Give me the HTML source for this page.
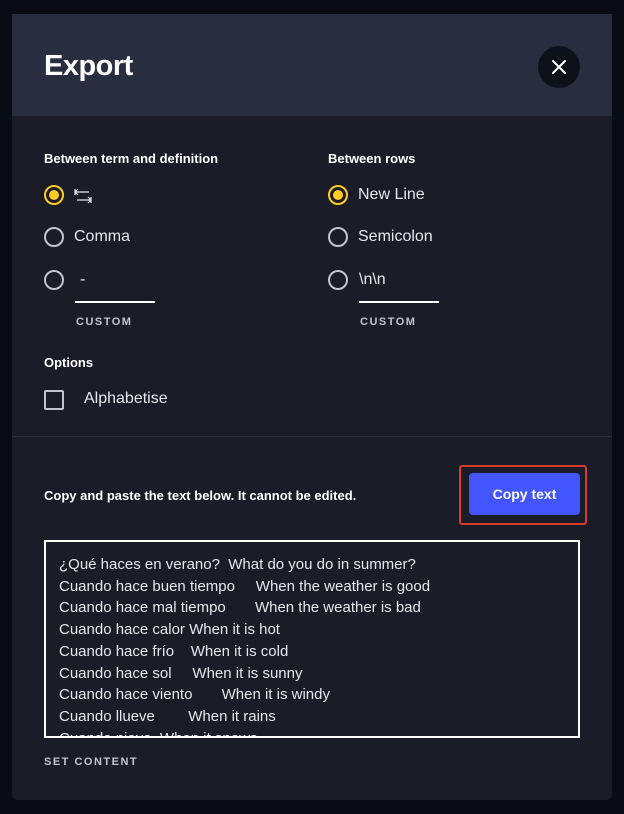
<!DOCTYPE html>
<html><head><style>
body{margin:0;width:624px;height:814px;background:#0a0c15;font-family:"Liberation Sans",sans-serif;position:relative;overflow:hidden;color:#fff}
.m{position:absolute;left:12px;top:14px;width:600px;height:786px;background:#1a1d28;border-radius:0 0 6px 6px}
.h{position:absolute;left:0;top:0;width:600px;height:102px;background:#282e3f}
.h h1{position:absolute;left:32px;top:36px;margin:0;font-size:29px;font-weight:bold;letter-spacing:-0.5px}
.x{position:absolute;left:526px;top:32px;width:42px;height:42px;border-radius:50%;background:#0f111a}
.lbl{position:absolute;font-size:13px;font-weight:bold;color:#fff}
.r{position:absolute;width:20px;height:20px;border:2px solid #c2c5cf;border-radius:50%;box-sizing:border-box}
.r.on{border-color:#ffcd1f}
.r.on::after{content:"";position:absolute;left:3px;top:3px;width:10px;height:10px;border-radius:50%;background:#ffcd1f}
.t{position:absolute;font-size:16px;color:#e6e7ec}
.ul{position:absolute;width:80px;height:2px;background:#fff}
.cap{position:absolute;font-size:11px;letter-spacing:1.5px;color:#c2c5cf;font-weight:bold}
.ta{position:absolute;left:32px;top:526px;width:536px;height:198px;border:2px solid #fff;box-sizing:border-box;overflow:hidden;padding:12px 0 0 13px;font-size:15px;line-height:21.7px;color:#e6e7ec;white-space:pre}
</style></head><body>
<div class="m">
<div class="h"><h1>Export</h1>
<div class="x"><svg width="42" height="42"><path d="M15 15L27 27M27 15L15 27" stroke="#fff" stroke-width="2" stroke-linecap="round"/></svg></div></div>
<div class="lbl" style="left:32px;top:137px">Between term and definition</div>
<div class="lbl" style="left:316px;top:137px">Between rows</div>
<div class="r on" style="left:32px;top:171px"></div>
<svg style="position:absolute;left:62px;top:174px" width="18" height="16"><path d="M1 1v6M1 4h14M1 4l3-3M1 4l3 3M17 9v6M3 12h14M17 12l-3-3M17 12l-3 3" stroke="#e6e7ec" stroke-width="1.2" fill="none"/></svg>
<div class="r" style="left:32px;top:213px"></div><div class="t" style="left:62px;top:214px">Comma</div>
<div class="r" style="left:32px;top:256px"></div><div class="t" style="left:68px;top:257px">-</div>
<div class="ul" style="left:63px;top:287px"></div><div class="cap" style="left:64px;top:302px">CUSTOM</div>
<div class="r on" style="left:316px;top:171px"></div><div class="t" style="left:346px;top:172px">New Line</div>
<div class="r" style="left:316px;top:213px"></div><div class="t" style="left:346px;top:214px">Semicolon</div>
<div class="r" style="left:316px;top:256px"></div><div class="t" style="left:347px;top:257px">\n\n</div>
<div class="ul" style="left:347px;top:287px"></div><div class="cap" style="left:348px;top:302px">CUSTOM</div>
<div class="lbl" style="left:32px;top:341px">Options</div>
<div style="position:absolute;left:32px;top:376px;width:20px;height:20px;border:2px solid #c2c5cf;box-sizing:border-box;border-radius:2px"></div>
<div class="t" style="left:72px;top:376px">Alphabetise</div>
<div style="position:absolute;left:0;top:422px;width:600px;height:1px;background:#2a2e3a"></div>
<div class="lbl" style="left:32px;top:474px">Copy and paste the text below. It cannot be edited.</div>
<div style="position:absolute;left:447px;top:451px;width:128px;height:60px;border:2px solid #d83a2c;box-sizing:border-box;border-radius:3px"></div>
<div style="position:absolute;left:457px;top:459px;width:111px;height:42px;background:#4255ff;border-radius:4px;font-size:14px;font-weight:bold;text-align:center;line-height:42px">Copy text</div>
<div class="ta">¿Qué haces en verano?  What do you do in summer?
Cuando hace buen tiempo     When the weather is good
Cuando hace mal tiempo       When the weather is bad
Cuando hace calor When it is hot
Cuando hace frío    When it is cold
Cuando hace sol     When it is sunny
Cuando hace viento       When it is windy
Cuando llueve        When it rains
Cuando nieva  When it snows</div>
<div class="cap" style="left:32px;top:742px">SET CONTENT</div>
</div>
</body></html>
